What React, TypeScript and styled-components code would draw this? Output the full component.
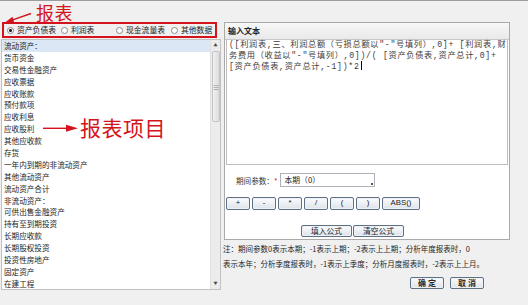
import * as React from "react";
import styled, { createGlobalStyle, css } from "styled-components";

const CJK = `"Noto Sans CJK SC", "Noto Sans", sans-serif`;
const RED = "#d3141c";

const reportTypes = ["资产负债表", "利润表", "现金流量表", "其他数据"];

const items = [
  "流动资产：",
  "货币资金",
  "交易性金融资产",
  "应收票据",
  "应收账款",
  "预付款项",
  "应收利息",
  "应收股利",
  "其他应收款",
  "存货",
  "一年内到期的非流动资产",
  "其他流动资产",
  "流动资产合计",
  "非流动资产：",
  "可供出售金融资产",
  "持有至到期投资",
  "长期应收款",
  "长期股权投资",
  "投资性房地产",
  "固定资产",
  "在建工程",
];

const formula = [
  '([利润表,三、利润总额（亏损总额以"-"号填列）,0]+ [利润表,财',
  '务费用（收益以"-"号填列）,0])/( [资产负债表,资产总计,0]+',
  "[资产负债表,资产总计,-1])*2",
];

const operators = ["+", "-", "*", "/", "(", ")", "ABS()"];

interface State {
  report: number;
  selected: number;
}

class App extends React.Component<{}, State> {
  state: State = {
    report: 0,
    selected: 0,
  };
  render() {
    const { report, selected } = this.state;
    return (
      <Page>
        <GlobalStyle />
        <LeftCol>
          <RadioBox>
            {reportTypes.map((name, i) => (
              <RadioItem key={name} onClick={() => this.setState({ report: i })}>
                <RadioDot checked={report === i} />
                {name}
              </RadioItem>
            ))}
          </RadioBox>
          <ListBox>
            <ListItems>
              {items.map((name, i) => (
                <Item
                  key={name}
                  active={selected === i}
                  onClick={() => this.setState({ selected: i })}
                >
                  {name}
                </Item>
              ))}
            </ListItems>
            <ScrollBar>
              <ScrollArrow>▲</ScrollArrow>
              <Thumb>≡</Thumb>
              <ScrollTrack />
              <ScrollArrow>▼</ScrollArrow>
            </ScrollBar>
          </ListBox>
        </LeftCol>

        <RightCol>
          <Panel>
            <PanelHead>输入文本</PanelHead>
            <Editor role="textbox">
              {formula.map((line, i) => (
                <EditorLine key={i}>
                  {line}
                  {i === formula.length - 1 && <Caret />}
                </EditorLine>
              ))}
            </Editor>
            <ParamRow>
              <ParamLabel>期间参数：</ParamLabel>
              <Star>*</Star>
              <ParamInput>
                本期（0）
                <Grip />
              </ParamInput>
            </ParamRow>
            <OpRow>
              {operators.map((op) => (
                <Button key={op} wide={op.length > 1}>
                  {op}
                </Button>
              ))}
            </OpRow>
            <FillRow>
              <Button size="fill">填入公式</Button>
              <Button size="fill">清空公式</Button>
            </FillRow>
          </Panel>
          <Notes>
            注：期间参数0表示本期；-1表示上期；-2表示上上期；分析年度报表时，0
            <br />
            表示本年；分析季度报表时，-1表示上季度；分析月度报表时，-2表示上上月。
          </Notes>
          <Actions>
            <Button size="action">确 定</Button>
            <Button size="action">取 消</Button>
          </Actions>
        </RightCol>

        <Callout top={2} left={36} size={18}>
          报表
        </Callout>
        <Callout top={116} left={80} size={21}>
          报表项目
        </Callout>
        <Arrows width="528" height="305" viewBox="0 0 528 305">
          <line x1="31" y1="12.5" x2="12" y2="19.2" stroke={RED} strokeWidth="1.4" />
          <polygon points="5,21.5 12.5,15.8 14.2,21.6" fill={RED} />
          <line x1="43" y1="127.3" x2="68" y2="127.3" stroke={RED} strokeWidth="1.4" />
          <polygon points="66,123.8 78,127.3 66,130.8" fill={RED} />
        </Arrows>
      </Page>
    );
  }
}
export default App;

const GlobalStyle = createGlobalStyle`
  body {
    margin: 0;
    font-family: ${CJK};
    color: #1c1c1c;
  }
`;

const Page = styled.div`
  position: relative;
  width: 528px;
  height: 305px;
  box-sizing: border-box;
  overflow: hidden;
  background: #f0f0f0;
  border-top: 1px solid #9c9c9c;
  padding: 21px 0 0 1px;
  display: flex;
  gap: 3px;
`;

const LeftCol = styled.div`
  width: 220px;
  display: flex;
  flex-direction: column;
  gap: 1px;
`;

const RadioBox = styled.div`
  margin-left: 1px;
  width: 215px;
  height: 16px;
  box-sizing: border-box;
  border: 2px solid ${RED};
  padding-left: 2px;
  display: grid;
  grid-template-columns: 54px 55px 55px 1fr;
  align-items: center;
`;

const RadioItem = styled.label`
  display: flex;
  align-items: center;
  gap: 2px;
  font-size: 7.8px;
  line-height: 12px;
  white-space: nowrap;
  cursor: pointer;
`;

const RadioDot = styled.span`
  width: 5px;
  height: 5px;
  border-radius: 50%;
  border: 1px solid #8a8a8a;
  background: #fff;
  margin: 0 1px;
  ${(props) =>
    props.checked &&
    css`
      background: radial-gradient(circle, #222 0 1.3px, #fff 1.6px);
    `}
`;

const ListBox = styled.div`
  height: 251px;
  box-sizing: border-box;
  border: 1px solid #c2c2c2;
  background: #fff;
  display: flex;
`;

const ListItems = styled.div`
  flex: 1;
  overflow: hidden;
`;

const Item = styled.div`
  height: 11.9px;
  line-height: 11.9px;
  padding-left: 2px;
  font-size: 7.6px;
  white-space: nowrap;
  cursor: default;
  ${(props) =>
    props.active &&
    css`
      background: #dbe7f5;
    `}
`;

const ScrollBar = styled.div`
  width: 9px;
  background: #ececec;
  border-left: 1px solid #e0e0e0;
  display: flex;
  flex-direction: column;
`;

const ScrollArrow = styled.div`
  height: 11px;
  font-size: 4px;
  line-height: 11px;
  text-align: center;
  color: #444;
`;

const Thumb = styled.div`
  height: 71px;
  margin: 0 0 0 1px;
  box-sizing: border-box;
  border: 1px solid #c4c4c4;
  border-radius: 2px;
  background: linear-gradient(to right, #f1f1f1, #dcdcdc);
  font-size: 7px;
  color: #888;
  display: flex;
  align-items: center;
  justify-content: center;
`;

const ScrollTrack = styled.div`
  flex: 1;
`;

const RightCol = styled.div`
  width: 286px;
  display: flex;
  flex-direction: column;
`;

const Panel = styled.div`
  height: 218px;
  box-sizing: border-box;
  border: 1px solid #aaaaaa;
  background: #fff;
  display: flex;
  flex-direction: column;
`;

const PanelHead = styled.div`
  height: 17px;
  box-sizing: border-box;
  border-bottom: 1px solid #c8c8c8;
  background: linear-gradient(#f7f7f7, #e9e9e9);
  padding-left: 3px;
  font-size: 8px;
  font-weight: bold;
  line-height: 16px;
  color: #222;
`;

const Editor = styled.div`
  height: 125px;
  box-sizing: border-box;
  margin: 0 1px;
  border: 1px solid #bdbdbd;
  border-top: none;
  padding: 0 2px;
  font-family: "Liberation Mono", "Noto Sans CJK SC", monospace;
  font-size: 8.2px;
  letter-spacing: 0.7px;
  line-height: 10.7px;
  color: #3c3c3c;
`;

const EditorLine = styled.div`
  white-space: pre;
`;

const Caret = styled.span`
  display: inline-block;
  width: 1px;
  height: 9px;
  margin-left: 1px;
  vertical-align: -1px;
  background: #000;
`;

const ParamRow = styled.div`
  margin-top: 8px;
  padding-left: 11px;
  height: 14px;
  display: flex;
  align-items: center;
  font-size: 7.6px;
`;

const ParamLabel = styled.span`
  color: #333;
`;

const Star = styled.span`
  color: ${RED};
  margin: 0 2px 0 0;
`;

const ParamInput = styled.div`
  position: relative;
  width: 95px;
  height: 14px;
  box-sizing: border-box;
  border: 1px solid #abb2ba;
  padding-left: 4px;
  line-height: 12px;
  font-size: 7.8px;
  color: #222;
`;

const Grip = styled.span`
  position: absolute;
  right: 1px;
  bottom: 1px;
  width: 2px;
  height: 2px;
  background: #555;
`;

const OpRow = styled.div`
  margin-top: 10px;
  padding-left: 1px;
  display: flex;
  gap: 2px;
`;

const FillRow = styled.div`
  margin-top: 15px;
  padding-left: 76px;
  display: flex;
  gap: 1px;
`;

const Button = styled.button`
  height: 12.5px;
  width: ${(props) => (props.wide ? "38px" : "24px")};
  box-sizing: border-box;
  padding: 0;
  border: 1px solid #5e7185;
  border-radius: 2px;
  background: linear-gradient(#fbfcfd, #dde3ea);
  box-shadow: inset 0 0 0 1px #eef2f6;
  font-family: "Liberation Sans", ${CJK};
  font-size: 7.8px;
  line-height: 10px;
  color: #222;
  cursor: pointer;
  ${(props) =>
    props.size === "fill" &&
    css`
      width: 51px;
      height: 12px;
      font-family: ${CJK};
    `}
  ${(props) =>
    props.size === "action" &&
    css`
      width: 34px;
      height: 12px;
      font-family: ${CJK};
      font-weight: bold;
      font-size: 8px;
      color: #2a2a2a;
    `}
`;

const Notes = styled.p`
  margin: 0;
  margin-left: -1px;
  font-size: 7.5px;
  line-height: 15px;
  padding-top: 1px;
  white-space: nowrap;
  color: #1e1e1e;
`;

const Actions = styled.div`
  margin-top: 6px;
  padding-right: 26px;
  display: flex;
  justify-content: flex-end;
  gap: 6px;
`;

const Callout = styled.div`
  position: absolute;
  top: ${(props) => props.top}px;
  left: ${(props) => props.left}px;
  font-family: ${CJK};
  font-size: ${(props) => props.size}px;
  line-height: 1;
  color: ${RED};
  letter-spacing: 0.5px;
  pointer-events: none;
`;

const Arrows = styled.svg`
  position: absolute;
  inset: 0;
  pointer-events: none;
`;
